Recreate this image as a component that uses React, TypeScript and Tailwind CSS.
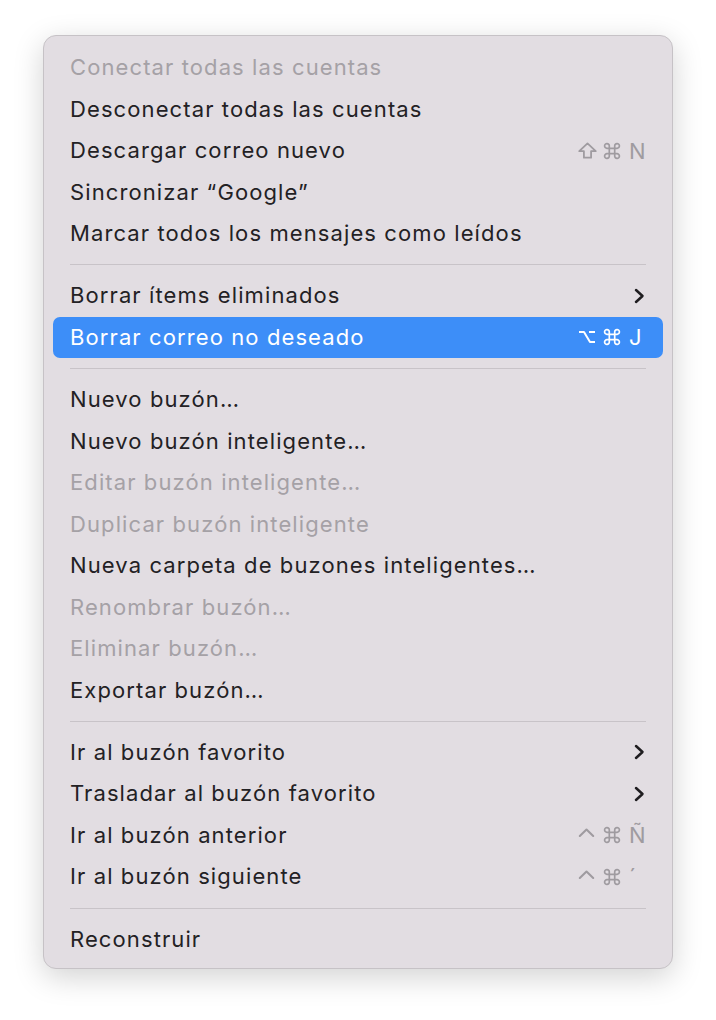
import React from "react";

type Mod = "shift" | "cmd" | "opt" | "ctrl";

type Item =
  | { type: "sep" }
  | {
      type: "item";
      label: string;
      disabled?: boolean;
      active?: boolean;
      submenu?: boolean;
      shortcut?: [Mod, Mod, string];
    };

const items: Item[] = [
  { type: "item", label: "Conectar todas las cuentas", disabled: true },
  { type: "item", label: "Desconectar todas las cuentas" },
  { type: "item", label: "Descargar correo nuevo", shortcut: ["shift", "cmd", "N"] },
  { type: "item", label: "Sincronizar “Google”" },
  { type: "item", label: "Marcar todos los mensajes como leídos" },
  { type: "sep" },
  { type: "item", label: "Borrar ítems eliminados", submenu: true },
  { type: "item", label: "Borrar correo no deseado", active: true, shortcut: ["opt", "cmd", "J"] },
  { type: "sep" },
  { type: "item", label: "Nuevo buzón…" },
  { type: "item", label: "Nuevo buzón inteligente…" },
  { type: "item", label: "Editar buzón inteligente…", disabled: true },
  { type: "item", label: "Duplicar buzón inteligente", disabled: true },
  { type: "item", label: "Nueva carpeta de buzones inteligentes…" },
  { type: "item", label: "Renombrar buzón…", disabled: true },
  { type: "item", label: "Eliminar buzón…", disabled: true },
  { type: "item", label: "Exportar buzón…" },
  { type: "sep" },
  { type: "item", label: "Ir al buzón favorito", submenu: true },
  { type: "item", label: "Trasladar al buzón favorito", submenu: true },
  { type: "item", label: "Ir al buzón anterior", shortcut: ["ctrl", "cmd", "Ñ"] },
  { type: "item", label: "Ir al buzón siguiente", shortcut: ["ctrl", "cmd", "´"] },
  { type: "sep" },
  { type: "item", label: "Reconstruir" },
];

function Chevron() {
  return (
    <svg width="12" height="18" viewBox="0 0 12 18" fill="none">
      <path d="M3 3 L9.5 9 L3 15" stroke="#1f1d20" strokeWidth="2.5" strokeLinecap="round" strokeLinejoin="round" />
    </svg>
  );
}

function ModIcon({ kind, color }: { kind: Mod; color: string }) {
  if (kind === "shift") {
    return (
      <svg width="19" height="17" viewBox="0 0 18 16" fill="none">
        <path d="M9 1.2 L16.8 8.6 H12.4 V14.8 H5.6 V8.6 H1.2 Z" stroke={color} strokeWidth="1.7" strokeLinejoin="round" />
      </svg>
    );
  }
  if (kind === "cmd") {
    return (
      <svg width="18" height="18" viewBox="0 0 16 16" fill="none">
        <path
          d="M5.6 5.6 V3.7 A2.1 2.1 0 1 0 3.7 5.6 H12.3 A2.1 2.1 0 1 0 10.4 3.7 V12.3 A2.1 2.1 0 1 0 12.3 10.4 H3.7 A2.1 2.1 0 1 0 5.6 12.3 Z"
          stroke={color}
          strokeWidth="1.5"
          strokeLinejoin="round"
        />
      </svg>
    );
  }
  if (kind === "opt") {
    return (
      <svg width="18" height="14" viewBox="0 0 18 14" fill="none">
        <path d="M1 2 H6 L12 12 H17 M11 2 H17" stroke={color} strokeWidth="2" strokeLinejoin="round" />
      </svg>
    );
  }
  return (
    <svg width="17" height="16" viewBox="0 0 17 16" fill="none">
      <path d="M1.8 9 L8.5 2.6 L15.2 9" stroke={color} strokeWidth="2.1" strokeLinecap="round" strokeLinejoin="round" />
    </svg>
  );
}

export default function App() {
  return (
    <div
      className="w-[716px] h-[1020px] bg-white pl-[43px] pt-[35px]"
      style={{ fontFamily: "Inter, 'Noto Sans', sans-serif" }}
    >
      <div className="w-[630px] h-[934px] rounded-[13px] bg-[#e2dde2] border border-[#c6c2c6] shadow-[0_8px_30px_rgba(0,0,0,0.18)] pt-[11px] pb-[8px] flex flex-col">
        {items.map((it, i) => {
          if (it.type === "sep") {
            return (
              <div key={i} className="h-[21px] flex items-center px-[26px]">
                <div className="h-px w-full bg-[#c8c3c8]" />
              </div>
            );
          }
          const color = it.active ? "text-white" : it.disabled ? "text-[#a5a1a6]" : "text-[#232124]";
          const scColor = it.active ? "#ffffff" : "#9f9ba0";
          return (
            <div
              key={i}
              className={`h-[41.5px] mx-[9px] rounded-[7px] flex items-center pl-[17px] pr-[17px] ${
                it.active ? "bg-[#3d8ef8]" : ""
              }`}
            >
              <span className={`flex-1 text-[22px] tracking-[1.1px] whitespace-nowrap ${color}`}>{it.label}</span>
              {it.submenu && (
                <span className="mr-[1px] flex items-center">
                  <Chevron />
                </span>
              )}
              {it.shortcut && (
                <span className="flex items-center">
                  <span className="w-[25px] flex items-center">
                    <ModIcon kind={it.shortcut[0]} color={scColor} />
                  </span>
                  <span className="w-[26px] flex items-center">
                    <ModIcon kind={it.shortcut[1]} color={scColor} />
                  </span>
                  <span
                    className={`w-[17px] text-[22px] leading-none ${it.active ? "text-white" : "text-[#9f9ba0]"}`}
                  >
                    {it.shortcut[2]}
                  </span>
                </span>
              )}
            </div>
          );
        })}
      </div>
    </div>
  );
}
